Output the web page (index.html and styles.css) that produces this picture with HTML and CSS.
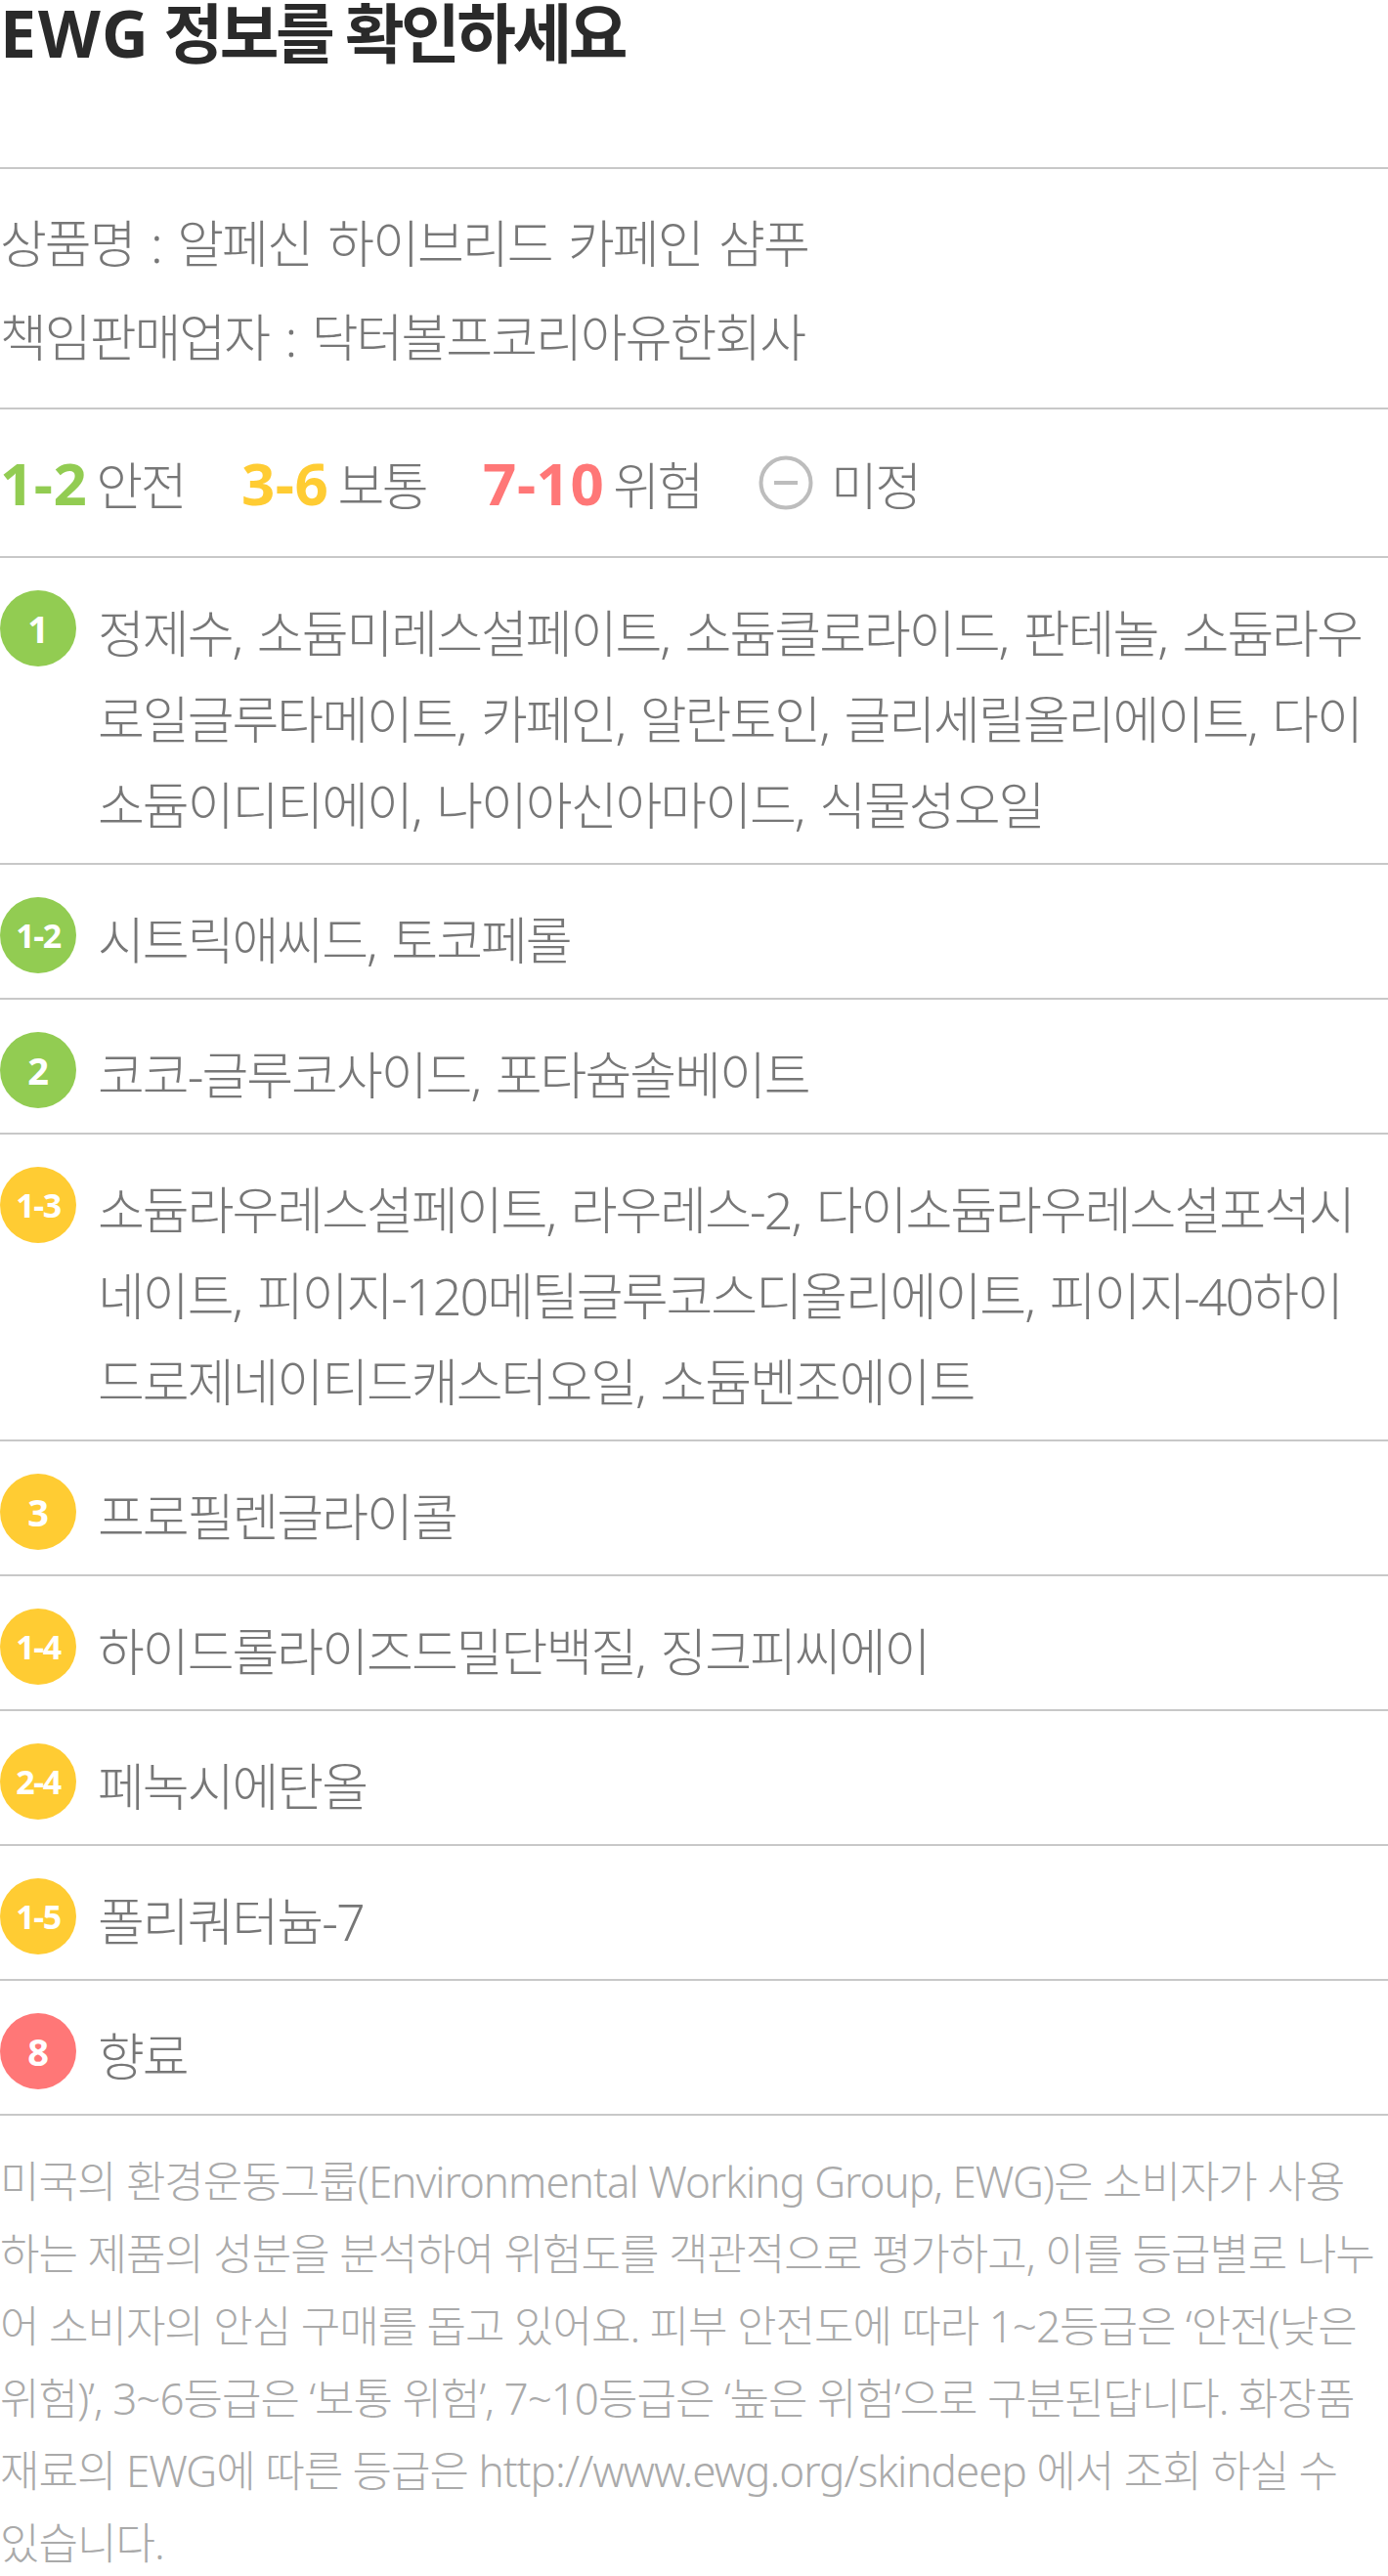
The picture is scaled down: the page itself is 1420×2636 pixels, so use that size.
FILE: index.html
```html
<!DOCTYPE html>
<html lang="ko">

<head>
    <meta charset="UTF-8">
    <meta name="viewport" content="width=device-width, initial-scale=1.0">
    <title>EWG 정보</title>
    <link rel="stylesheet" href="styles.css">
</head>

<body>
    <div class="ewg">
        <h1 class="ewg-title"><span class="en">EWG</span> 정보를 확인하세요</h1>

        <div class="info">
            <p>상품명 : 알페신 하이브리드 카페인 샴푸</p>
            <p>책임판매업자 : 닥터볼프코리아유한회사</p>
        </div>

        <div class="legend">
            <span class="grp"><b class="num green">1-2</b>안전</span>
            <span class="grp"><b class="num yellow">3-6</b>보통</span>
            <span class="grp"><b class="num red">7-10</b>위험</span>
            <span class="grp">
                <svg class="none-icon" width="56" height="56" viewBox="0 0 56 56">
                    <circle cx="28" cy="28" r="25.5" fill="none" stroke="#bdbdbd" stroke-width="4" />
                    <line x1="16" y1="28" x2="40" y2="28" stroke="#bdbdbd" stroke-width="4" />
                </svg>미정
            </span>
        </div>

        <ul class="list">
            <li class="item">
                <span class="badge bg-green">1</span>
                <p class="names">정제수, 소듐미레스설페이트, 소듐클로라이드, 판테놀, 소듐라우<br>로일글루타메이트, 카페인, 알란토인, 글리세릴올리에이트, 다이<br>소듐이디티에이, 나이아신아마이드, 식물성오일</p>
            </li>
            <li class="item">
                <span class="badge bg-green range">1-2</span>
                <p class="names">시트릭애씨드, 토코페롤</p>
            </li>
            <li class="item">
                <span class="badge bg-green">2</span>
                <p class="names">코코-글루코사이드, 포타슘솔베이트</p>
            </li>
            <li class="item">
                <span class="badge bg-yellow range">1-3</span>
                <p class="names">소듐라우레스설페이트, 라우레스-2, 다이소듐라우레스설포석시<br>네이트, 피이지-120메틸글루코스디올리에이트, 피이지-40하이<br>드로제네이티드캐스터오일, 소듐벤조에이트</p>
            </li>
            <li class="item">
                <span class="badge bg-yellow">3</span>
                <p class="names">프로필렌글라이콜</p>
            </li>
            <li class="item">
                <span class="badge bg-yellow range">1-4</span>
                <p class="names">하이드롤라이즈드밀단백질, 징크피씨에이</p>
            </li>
            <li class="item">
                <span class="badge bg-yellow range">2-4</span>
                <p class="names">페녹시에탄올</p>
            </li>
            <li class="item">
                <span class="badge bg-yellow range">1-5</span>
                <p class="names">폴리쿼터늄-7</p>
            </li>
            <li class="item">
                <span class="badge bg-red">8</span>
                <p class="names">향료</p>
            </li>
        </ul>

        <p class="note">미국의 환경운동그룹(Environmental Working Group, EWG)은 소비자가 사용<br>하는 제품의 성분을 분석하여 위험도를 객관적으로 평가하고, 이를 등급별로 나누<br>어 소비자의 안심 구매를 돕고 있어요. 피부 안전도에 따라 1~2등급은 ‘안전(낮은<br>위험)’, 3~6등급은 ‘보통 위험’, 7~10등급은 ‘높은 위험’으로 구분된답니다. 화장품<br>재료의 EWG에 따른 등급은 http://www.ewg.org/skindeep 에서 조회 하실 수<br>있습니다.</p>
    </div>
</body>

</html>
```

FILE: styles.css
```css
body {
    margin: 0;
    background: #fff;
    overflow-x: hidden;
    font-family: "Noto Sans", "Noto Sans CJK KR", sans-serif;
}

.ewg {
    width: 1420px;
}

.ewg-title {
    margin: 0 0 105px;
    font-size: 66px;
    line-height: 66px;
    font-weight: 700;
    color: #2a2a2a;
    letter-spacing: -3.5px;
}

.ewg-title .en {
    letter-spacing: 2px;
}

.info {
    border-top: 2px solid #c8c8c8;
    border-bottom: 2px solid #c8c8c8;
    padding: 28px 0 24px;
}

.info p {
    margin: 0;
    font-size: 52px;
    line-height: 96px;
    font-weight: 300;
    color: #777;
    letter-spacing: -2px;
    word-spacing: 5px;
}

.legend {
    height: 150px;
    display: flex;
    align-items: center;
    gap: 58px;
    border-bottom: 2px solid #c8c8c8;
}

.grp {
    display: flex;
    align-items: center;
    font-size: 52px;
    font-weight: 300;
    color: #777;
    letter-spacing: -2.5px;
}

.num {
    font-size: 60px;
    font-weight: 700;
    letter-spacing: 0.5px;
    margin-right: 9px;
}

.none-icon {
    margin-right: 18px;
}

.green {
    color: #92cc52;
}

.yellow {
    color: #ffcc33;
}

.red {
    color: #ff7777;
}

.list {
    list-style: none;
    margin: 0;
    padding: 0;
}

.item {
    display: flex;
    align-items: flex-start;
    gap: 22px;
    padding: 33px 0 15px;
    border-bottom: 2px solid #c8c8c8;
}

.badge {
    flex: none;
    width: 78px;
    height: 78px;
    border-radius: 50%;
    display: flex;
    align-items: center;
    justify-content: center;
    color: #fff;
    font-size: 38px;
    font-weight: 700;
}

.badge.range {
    font-size: 34px;
    letter-spacing: -1.5px;
}

.bg-green {
    background: #92cc52;
}

.bg-yellow {
    background: #ffcc33;
}

.bg-red {
    background: #ff7777;
}

.names {
    margin: 0;
    font-size: 52px;
    line-height: 88px;
    font-weight: 300;
    color: #777;
    letter-spacing: -2px;
    word-spacing: 4px;
    white-space: nowrap;
}

.note {
    margin: 0;
    padding: 30px 0 0;
    font-size: 44px;
    line-height: 74px;
    font-weight: 300;
    color: #aaa;
    letter-spacing: -1px;
    white-space: nowrap;
}
```
